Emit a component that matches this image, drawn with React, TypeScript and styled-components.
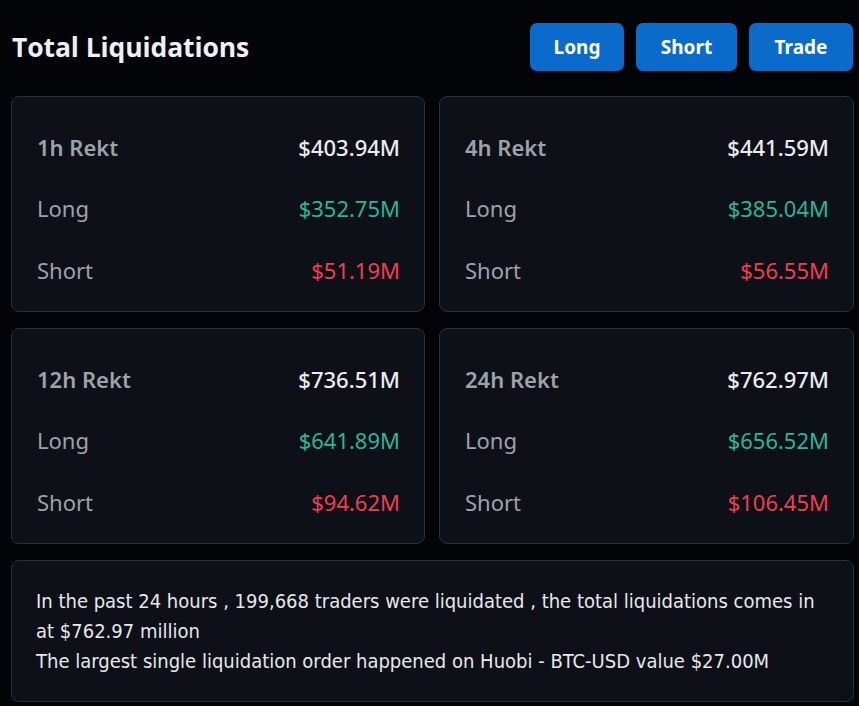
import React from "react";
import styled, { createGlobalStyle } from "styled-components";

const Global = createGlobalStyle`
  html, body { margin: 0; padding: 0; background: #030408; }
  body { font-family: "Noto Sans", sans-serif; }
`;

const Page = styled.div`
  padding: 23px 6px 6px 11px;
  display: flex;
  flex-direction: column;
  gap: 16px;
`;

const Header = styled.div`
  display: flex;
  align-items: center;
  justify-content: space-between;
  height: 48px;
  margin-bottom: 9px;
`;

const Title = styled.h1`
  margin: 0 0 0 1px;
  font-family: "Open Sans", sans-serif;
  font-weight: 700;
  font-size: 26.5px;
  color: #eef0f5;
  letter-spacing: -0.1px;
`;

const Buttons = styled.div`
  display: flex;
  gap: 12px;
`;

const Button = styled.button<{ $w: number }>`
  width: ${(p) => p.$w}px;
  height: 48px;
  border: none;
  border-radius: 7px;
  background: #0b6bcb;
  color: #ffffff;
  font-family: "Noto Sans", sans-serif;
  font-weight: 700;
  font-size: 19px;
  cursor: pointer;
`;

const Grid = styled.div`
  display: grid;
  grid-template-columns: 414px 415px;
  column-gap: 14px;
  row-gap: 16px;
`;

const Card = styled.div`
  background: #0d1017;
  border: 1px solid #2b2f37;
  border-radius: 8px;
  box-sizing: border-box;
`;

const StatCard = styled(Card)`
  height: 216px;
  padding: 19px 24px 0 25px;
  display: flex;
  flex-direction: column;
`;

const Row = styled.div`
  display: flex;
  justify-content: space-between;
  align-items: center;
  height: 61.5px;
  font-size: 22px;
`;

const Label = styled.span<{ $strong?: boolean }>`
  color: #9ea2a9;
  font-weight: ${(p) => (p.$strong ? 600 : 400)};
`;

const Value = styled.span<{ $tone: "white" | "green" | "red"; $strong?: boolean }>`
  font-weight: ${(p) => (p.$strong ? 500 : 400)};
  color: ${(p) =>
    p.$tone === "green" ? "#2bb597" : p.$tone === "red" ? "#f23d4f" : "#eaecef"};
`;

const Summary = styled(Card)`
  grid-column: 1 / -1;
  padding: 25px 24px 25px 24px;
  font-family: "DejaVu Sans", sans-serif;
  font-stretch: condensed;
  font-size: 20px;
  line-height: 30px;
  color: #e6e8ec;
`;

const P = styled.p`
  margin: 0;
`;

type Stat = { period: string; total: string; long: string; short: string };

const stats: Stat[] = [
  { period: "1h Rekt", total: "$403.94M", long: "$352.75M", short: "$51.19M" },
  { period: "4h Rekt", total: "$441.59M", long: "$385.04M", short: "$56.55M" },
  { period: "12h Rekt", total: "$736.51M", long: "$641.89M", short: "$94.62M" },
  { period: "24h Rekt", total: "$762.97M", long: "$656.52M", short: "$106.45M" },
];

export default function App() {
  return (
    <>
      <Global />
      <Page>
        <Header>
          <Title>Total Liquidations</Title>
          <Buttons>
            <Button $w={94}>Long</Button>
            <Button $w={101}>Short</Button>
            <Button $w={104}>Trade</Button>
          </Buttons>
        </Header>
        <Grid>
          {stats.map((s) => (
            <StatCard key={s.period}>
              <Row>
                <Label $strong>{s.period}</Label>
                <Value $tone="white" $strong>{s.total}</Value>
              </Row>
              <Row>
                <Label>Long</Label>
                <Value $tone="green">{s.long}</Value>
              </Row>
              <Row>
                <Label>Short</Label>
                <Value $tone="red">{s.short}</Value>
              </Row>
            </StatCard>
          ))}
          <Summary>
            <P>
              In the past 24 hours , 199,668 traders were liquidated , the total liquidations comes in at $762.97 million
            </P>
            <P>The largest single liquidation order happened on Huobi - BTC-USD value $27.00M</P>
          </Summary>
        </Grid>
      </Page>
    </>
  );
}
